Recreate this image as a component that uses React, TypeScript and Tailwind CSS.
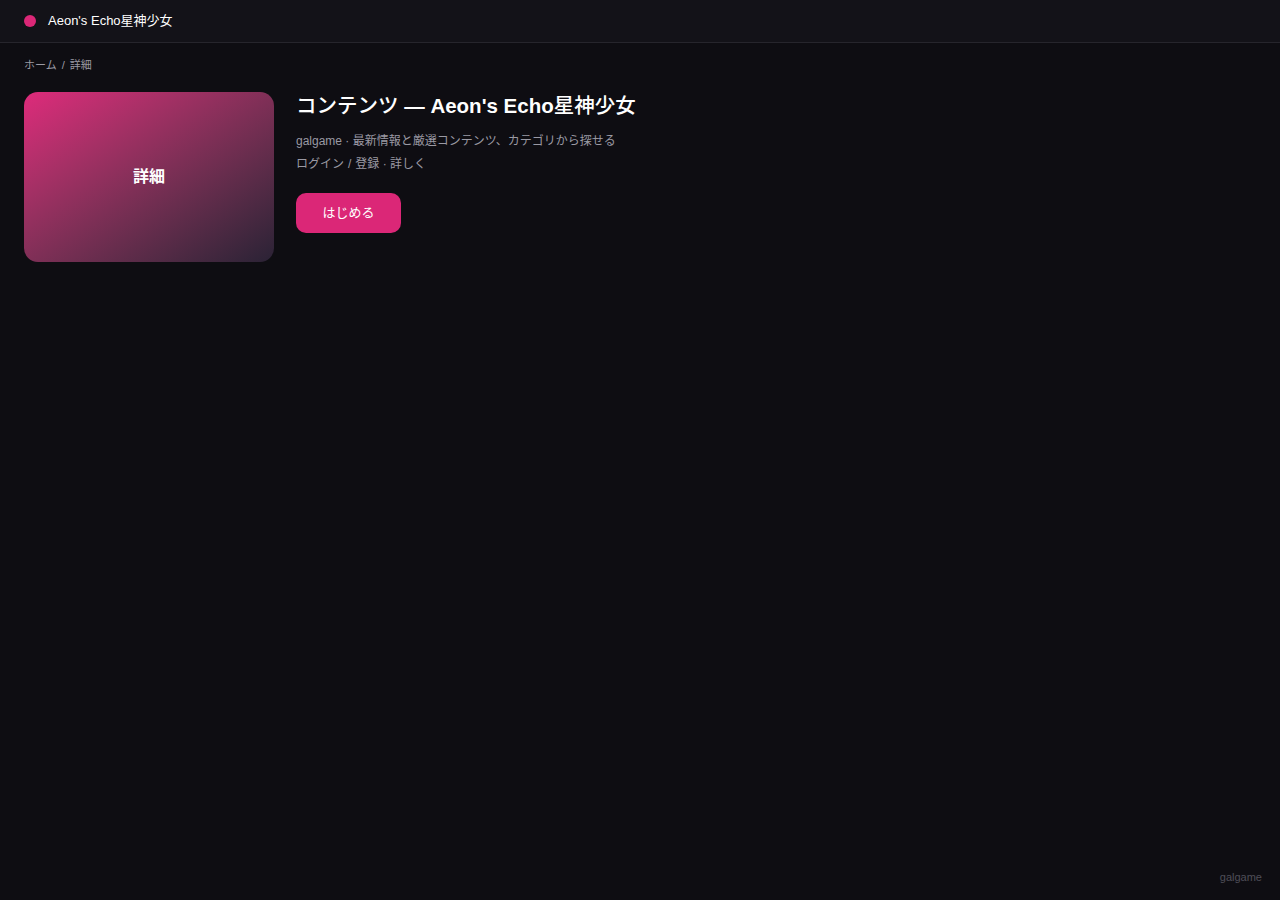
export default function App() {
  return (
    <div
      className="relative flex min-h-[900px] flex-col bg-[#0e0d12] text-white"
      style={{ fontFamily: '"Liberation Sans", "Noto Sans CJK JP", sans-serif' }}
    >
      <header className="flex h-[43px] items-center gap-3 border-b border-[#26252c] bg-[#131218] px-6">
        <span className="h-3 w-3 rounded-full bg-[#db2777]" />
        <span className="text-[13px] text-white">Aeon's Echo星神少女</span>
      </header>

      <main className="flex-1 px-6">
        <nav className="mt-[14px] text-[11px] text-[#9a99a3]">
          ホーム<span className="mx-[5px]">/</span>詳細
        </nav>

        <div className="mt-[18px] flex gap-[22px]">
          <div className="flex h-[170px] w-[250px] items-center justify-center rounded-[14px] bg-gradient-to-br from-[#de2a7b] to-[#2a2235]">
            <span className="text-base font-bold">詳細</span>
          </div>
          <div className="flex flex-col">
            <h1 className="text-[20.5px] font-bold leading-[28px]">
              <span className="font-medium">コンテンツ</span> — Aeon's Echo
              <span className="font-medium">星神少女</span>
            </h1>
            <p className="mt-[10px] text-[12px] leading-[23px] text-[#9a99a3]">
              galgame · 最新情報と厳選コンテンツ、カテゴリから探せる
            </p>
            <p className="text-[12px] leading-[23px] text-[#9a99a3]">
              ログイン<span className="mx-[4px]">/</span>登録 · 詳しく
            </p>
            <button
              type="button"
              className="mt-[17px] h-10 w-[105px] rounded-[10px] bg-[#db2777] text-[13px] text-white"
            >
              はじめる
            </button>
          </div>
        </div>
      </main>

      <footer className="flex justify-end px-[18px] pb-[15px] text-[11px] text-[#4f4e58]">galgame</footer>
    </div>
  );
}
